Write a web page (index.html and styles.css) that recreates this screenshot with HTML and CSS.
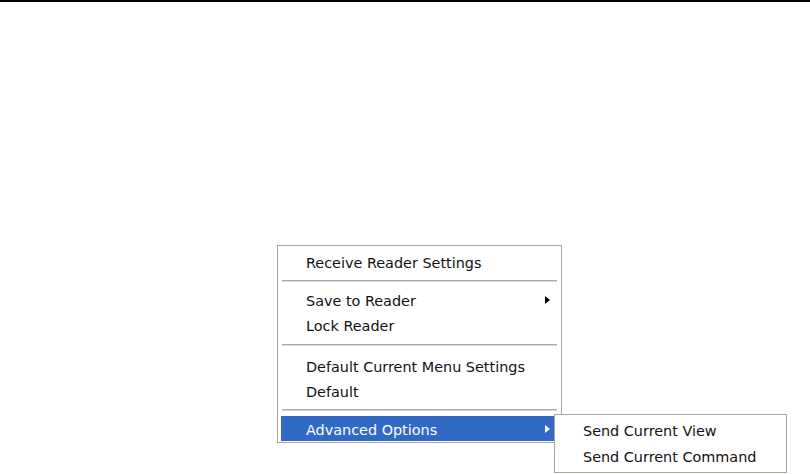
FILE: index.html
```html
<html>
	<head>
		<title>reader menu</title>
		<link rel="stylesheet" href="styles.css">
	</head>
	<body>
		<div class="rule"></div>
		<div class="stage">
			<div class="menu main">
				<div class="item">Receive Reader Settings</div>
				<div class="sep"></div>
				<div class="item">Save to Reader<span class="arrow"></span></div>
				<div class="item">Lock Reader</div>
				<div class="sep wide"></div>
				<div class="item">Default Current Menu Settings</div>
				<div class="item">Default</div>
				<div class="sep"></div>
				<div class="item active">Advanced Options<span class="arrow"></span>
					<div class="menu sub">
						<div class="item tall">Send Current View</div>
						<div class="item tall">Send Current Command</div>
					</div>
				</div>
			</div>
		</div>
	</body>
</html>
```

FILE: styles.css
```css
body{
	margin: 0;
	background-color: white;
	font-family: Tahoma, "DejaVu Sans", sans-serif;
	font-size: 14.4px;
	color: black;
}
.rule{
	height: 2px;
	background-color: black;
}
.stage{
	padding: 243px 0 0 277px;
}
.menu{
	background-color: white;
	border: 1px solid #aca899;
}
.main{
	width: 277px;
	padding: 3px 3px 1px 3px;
}
.sub{
	position: absolute;
	left: 273px;
	top: -2px;
	width: 225px;
	padding: 1px 3px 4px 3px;
	color: #111;
}
.item{
	position: relative;
	height: 25px;
	line-height: 25px;
	padding-left: 25px;
	padding-top: 2px;
	box-sizing: border-box;
	white-space: nowrap;
	color: #111;
}
.item.tall{
	height: 26px;
	line-height: 26px;
}
.active{
	background-color: #316ac5;
	color: white;
}
.arrow{
	position: absolute;
	right: 8px;
	top: 9px;
	width: 0;
	height: 0;
	border-left: 5px solid black;
	border-top: 4.5px solid transparent;
	border-bottom: 4.5px solid transparent;
}
.active > .arrow{
	border-left-color: white;
}
.sep{
	height: 13px;
	display: flex;
	align-items: center;
	padding: 0 1px;
}
.sep::before{
	content: "";
	flex: 1;
	height: 1px;
	background-color: #aca899;
	border-bottom: 1px solid #dcd9cf;
}
.sep.wide{
	height: 16px;
}
```
